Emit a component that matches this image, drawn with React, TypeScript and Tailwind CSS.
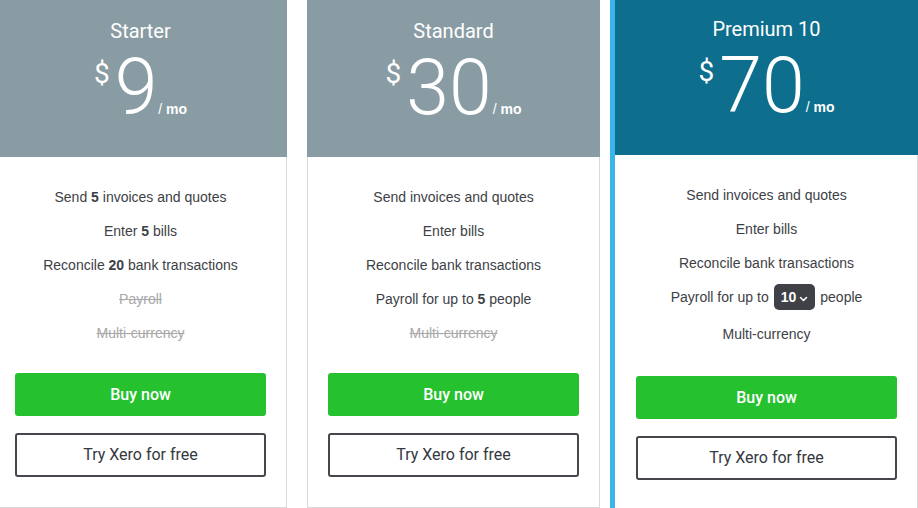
import React from "react";

const Price = ({ amount }: { amount: string }) => (
  <div className="flex justify-center items-baseline h-[76px] text-white">
    <span className="self-start mt-[10px] mr-[5px] text-[28px] leading-none" style={{ fontFamily: "Roboto, sans-serif" }}>$</span>
    <span className="text-[77px] leading-none font-light" style={{ fontFamily: "Roboto, sans-serif" }}>{amount}</span>
    <span className="ml-[1px] text-[14px] font-bold leading-none" style={{ fontFamily: "'Liberation Sans', Arial, sans-serif" }}>
      <span className="font-normal">/</span> mo
    </span>
  </div>
);

const Row = ({ children, struck, h = "h-[34px]" }: { children: React.ReactNode; struck?: boolean; h?: string }) => (
  <div className={`flex items-center justify-center ${h} text-[14px] ${struck ? "line-through text-[#a8a8a8]" : "text-[#3d4146]"}`}>
    <span>{children}</span>
  </div>
);

const Buttons = () => (
  <div className="flex flex-col gap-[17px]" style={{ fontFamily: "Roboto, sans-serif" }}>
    <button className="h-[43px] w-full rounded-[3px] bg-[#26c12e] text-white text-[16px] font-medium">Buy now</button>
    <button className="h-[44px] w-full rounded-[3px] border-2 border-[#45474c] bg-white text-[#35383d] text-[16px] font-normal">Try Xero for free</button>
  </div>
);

export default function App() {
  return (
    <div className="w-[918px] h-[508px] overflow-hidden bg-white" style={{ fontFamily: "'Liberation Sans', Arial, sans-serif" }}>
      <div className="flex ml-[-6px] items-start">
        {/* Starter */}
        <div className="w-[293px] shrink-0 flex flex-col h-[508px]">
          <div className="h-[157px] bg-[#899ca4] pt-[17px] flex flex-col">
            <div className="text-center text-white text-[20px] leading-[28px]" style={{ fontFamily: "Roboto, sans-serif" }}>Starter</div>
            <div className="mt-[5px]"><Price amount="9" /></div>
          </div>
          <div className="flex-1 border-x border-b border-[#d9d9d9] px-[20px] pt-[23px]">
            <Row>Send <b>5</b> invoices and quotes</Row>
            <Row>Enter <b>5</b> bills</Row>
            <Row>Reconcile <b>20</b> bank transactions</Row>
            <Row struck>Payroll</Row>
            <Row struck>Multi-currency</Row>
            <div className="mt-[23px]"><Buttons /></div>
          </div>
        </div>

        <div className="w-[20px] shrink-0" />

        {/* Standard */}
        <div className="w-[293px] shrink-0 flex flex-col h-[508px]">
          <div className="h-[157px] bg-[#899ca4] pt-[17px] flex flex-col">
            <div className="text-center text-white text-[20px] leading-[28px]" style={{ fontFamily: "Roboto, sans-serif" }}>Standard</div>
            <div className="mt-[5px]"><Price amount="30" /></div>
          </div>
          <div className="flex-1 border-x border-b border-[#d9d9d9] px-[20px] pt-[23px]">
            <Row>Send invoices and quotes</Row>
            <Row>Enter bills</Row>
            <Row>Reconcile bank transactions</Row>
            <Row>Payroll for up to <b>5</b> people</Row>
            <Row struck>Multi-currency</Row>
            <div className="mt-[23px]"><Buttons /></div>
          </div>
        </div>

        <div className="w-[10px] shrink-0" />

        {/* Premium */}
        <div className="w-[308px] shrink-0 flex flex-col h-[520px] border-l-[5px] border-[#3bb5e9]">
          <div className="h-[155px] bg-[#0e6e8d] pt-[15px] flex flex-col">
            <div className="text-center text-white text-[20px] leading-[28px]" style={{ fontFamily: "Roboto, sans-serif" }}>Premium 10</div>
            <div className="mt-[5px]"><Price amount="70" /></div>
          </div>
          <div className="flex-1 border-r border-[#d9d9d9] pl-[21px] pr-[20px] pt-[23px]">
            <Row>Send invoices and quotes</Row>
            <Row>Enter bills</Row>
            <Row>Reconcile bank transactions</Row>
            <div className="h-[37px] pb-[3px] flex items-center justify-center text-[14px] text-[#3d4146]">
              <span className="inline-flex items-center">
                Payroll for up to
                <span className="inline-flex items-center h-[26px] mx-[5px] px-[7px] rounded-[5px] bg-[#3f4146] text-white font-bold">
                  10
                  <svg width="9" height="6" viewBox="0 0 9 6" className="ml-[3px] mt-[3px]">
                    <path d="M1.5 1.5 L4.5 4.5 L7.5 1.5" fill="none" stroke="white" strokeWidth="1.6" strokeLinecap="round" strokeLinejoin="round" />
                  </svg>
                </span>
                people
              </span>
            </div>
            <Row>Multi-currency</Row>
            <div className="mt-[25px]"><Buttons /></div>
          </div>
        </div>
      </div>
    </div>
  );
}
